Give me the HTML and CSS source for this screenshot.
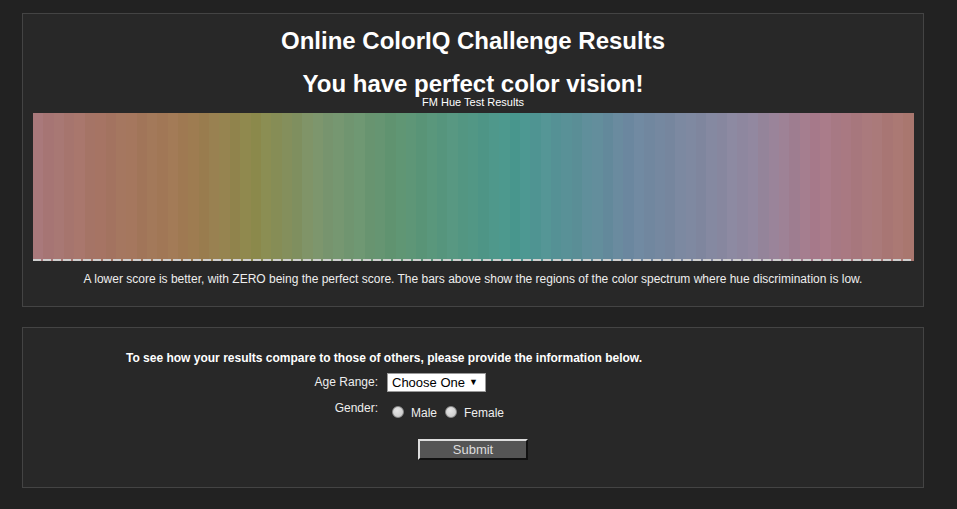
FILE: index.html
```html
<!DOCTYPE html>
<html>
<head>
    <title>Online ColorIQ Challenge Results</title>
    <link rel="stylesheet" href="styles.css">
</head>
<body>
    <div class="panel results">
        <h1 class="title">Online ColorIQ Challenge Results</h1>
        <h2 class="verdict">You have perfect color vision!</h2>
        <div class="chart-label">FM Hue Test Results</div>
        <div class="chart">
            <div class="bars" id="bars"></div>
            <div class="baseline"></div>
        </div>
        <p class="note">A lower score is better, with ZERO being the perfect score. The bars above show the regions of the color spectrum where hue discrimination is low.</p>
    </div>

    <div class="panel survey">
        <form class="survey-form">
            <div class="intro">To see how your results compare to those of others, please provide the information below.</div>
            <label class="field-label age-label" for="age">Age Range:</label>
            <div class="field">
                <span class="select-wrap">
                    <select id="age" class="age">
                        <option>Choose One</option>
                        <option>Under 20</option>
                        <option>20 - 29</option>
                        <option>30 - 39</option>
                        <option>40 - 49</option>
                        <option>50 - 59</option>
                        <option>60 +</option>
                    </select>
                </span>
            </div>
            <div class="field-label gender-label">Gender:</div>
            <div class="field radios">
                <input type="radio" name="gender" id="male"><label for="male">Male</label>
                <input type="radio" name="gender" id="female"><label for="female">Female</label>
            </div>
        </form>
        <div class="actions">
            <input type="button" value="Submit" class="submit">
        </div>
    </div>

    <script>
        // color stops along the spectrum, left to right
        const stops = [
            [0, [168, 120, 122]],
            [0.07, [166, 116, 100]],
            [0.17, [160, 122, 82]],
            [0.25, [140, 138, 76]],
            [0.33, [122, 150, 112]],
            [0.41, [96, 149, 114]],
            [0.55, [74, 152, 144]],
            [0.68, [108, 136, 160]],
            [0.76, [128, 136, 160]],
            [0.82, [146, 136, 160]],
            [0.895, [168, 122, 138]],
            [1, [170, 120, 112]]
        ];
        function colorAt(t) {
            for (let i = 1; i < stops.length; i++) {
                if (t <= stops[i][0]) {
                    const a = stops[i - 1], b = stops[i];
                    const f = (t - a[0]) / (b[0] - a[0]);
                    return a[1].map((v, k) => v + (b[1][k] - v) * f);
                }
            }
            return stops[stops.length - 1][1];
        }
        const bars = document.getElementById("bars");
        const count = 85;
        for (let i = 0; i < count; i++) {
            const c = colorAt(i / (count - 1));
            const shift = [1, -2, 1, -1, 2, -1, 0, -2, 1][i % 9];
            const bar = document.createElement("div");
            bar.className = "bar";
            bar.style.backgroundColor = "rgb(" + c.map(v => Math.round(v + shift)).join(",") + ")";
            bars.appendChild(bar);
        }
    </script>
</body>
</html>
```

FILE: styles.css
```css
body
{
    margin: 0;
    padding: 13px 0 20px 22px;
    background-color: #222222;
    color: #eeeeee;
    font-family: "Liberation Sans", Arial, sans-serif;
}
.panel
{
    width: 900px;
    background-color: #282828;
    border: 1px solid #444444;
}
.results
{
    height: 294px;
    padding: 0 10px;
    box-sizing: border-box;
    width: 902px;
    text-align: center;
}
.title
{
    margin: 0;
    padding-top: 13px;
    font-size: 24px;
    line-height: 28px;
    font-weight: bold;
    color: #ffffff;
}
.verdict
{
    margin: 15px 0 0 0;
    font-size: 24px;
    line-height: 28px;
    font-weight: bold;
    color: #ffffff;
}
.chart-label
{
    font-size: 11px;
    line-height: 11px;
    margin-top: -1px;
    margin-bottom: 5px;
    color: #ffffff;
}
.chart
{
    position: relative;
    height: 148px;
}
.bars
{
    display: flex;
    height: 100%;
}
.bar
{
    flex: 1;
}
.baseline
{
    position: absolute;
    left: 0;
    right: 0;
    bottom: 0;
    height: 2px;
    background: repeating-linear-gradient(to right, #d0d0d0 0, #d0d0d0 8px, transparent 8px, transparent 10px);
}
.note
{
    margin: 11px 0 0 0;
    font-size: 12px;
    line-height: 14px;
    color: #eeeeee;
}
.survey
{
    margin-top: 20px;
    width: 900px;
    height: 159px;
}
.survey-form
{
    display: grid;
    grid-template-columns: 252px auto;
    column-gap: 9px;
    row-gap: 0;
    margin: 23px 0 0 103px;
    font-size: 12px;
}
.intro
{
    grid-column: 1 / 3;
    font-weight: bold;
    color: #ffffff;
    line-height: 14px;
}
.field-label
{
    text-align: right;
    line-height: 18px;
    color: #eeeeee;
}
.field
{
    display: flex;
    align-items: center;
}
.select-wrap
{
    position: relative;
    margin-top: 8px;
}
.age-label
{
    margin-top: 8px;
}
.select-wrap::after
{
    content: "\25BC";
    position: absolute;
    right: 8px;
    top: 4px;
    font-size: 9px;
    color: #000000;
    pointer-events: none;
}
.age
{
    appearance: none;
    -webkit-appearance: none;
    width: 99px;
    height: 19px;
    padding: 0 0 0 4px;
    margin: 0;
    border: 1px solid #999999;
    border-radius: 0;
    background-color: #ffffff;
    color: #000000;
    font-family: "Liberation Sans", Arial, sans-serif;
    font-size: 13px;
    line-height: 17px;
}
.gender-label
{
    margin-top: 7px;
}
.radios
{
    margin-top: 11px;
    align-items: center;
}
.radios input
{
    appearance: none;
    -webkit-appearance: none;
    width: 12px;
    height: 12px;
    margin: 0 7px 0 8px;
    border-radius: 50%;
    background: radial-gradient(circle at 40% 35%, #e6e6e6, #c4c4c4);
    border: 1px solid #8a8a8a;
    box-sizing: border-box;
}
.radios input:first-child
{
    margin-left: 5px;
}
.radios label
{
    font-size: 12px;
    padding-top: 3px;
}
.actions
{
    text-align: center;
    margin-top: 19px;
}
.submit
{
    width: 110px;
    height: 21px;
    padding: 0;
    background-color: #555555;
    color: #dddddd;
    font-family: "Liberation Sans", Arial, sans-serif;
    font-size: 13px;
    border-top: 2px solid #dddddd;
    border-left: 2px solid #dddddd;
    border-bottom: 2px solid #111111;
    border-right: 2px solid #111111;
}
```
